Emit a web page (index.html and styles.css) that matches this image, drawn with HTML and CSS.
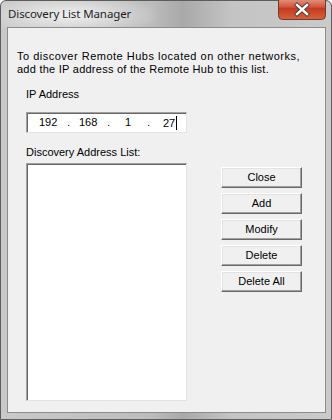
FILE: index.html
```html
<!DOCTYPE html>
<html>
<head>
<meta charset="utf-8">
<link rel="stylesheet" href="styles.css">
</head>
<body>
<div class="window">
  <div class="titlebar">
    <span class="title">Discovery List Manager</span>
    <div class="close-btn">
      <svg width="48" height="20" viewBox="0 0 48 20">
        <defs>
          <linearGradient id="rg" x1="0" y1="0" x2="0" y2="1">
            <stop offset="0" stop-color="#e8a592"/>
            <stop offset="0.45" stop-color="#d4533a"/>
            <stop offset="0.5" stop-color="#c3391f"/>
            <stop offset="1" stop-color="#d9623c"/>
          </linearGradient>
        </defs>
        <rect x="0.5" y="-3" width="47" height="22.5" rx="4" fill="url(#rg)" stroke="#6f3b32"/>
        <path d="M19 5 L29 14 M29 5 L19 14" stroke="#3d3d3d" stroke-width="4.2" stroke-linecap="square"/>
        <path d="M19 5 L29 14 M29 5 L19 14" stroke="#ffffff" stroke-width="2.4" stroke-linecap="square"/>
      </svg>
    </div>
  </div>
  <div class="client">
    <p class="intro"><span class="line1">To discover Remote Hubs located on other networks,</span><br><span class="line2">add the IP address of the Remote Hub to this list.</span></p>
    <div class="label ip-label">IP Address</div>
    <div class="ip-field">
      <span class="oct o1">192</span><span class="dot">.</span><span class="oct o2">168</span><span class="dot">.</span><span class="oct o3">1</span><span class="dot">.</span><span class="oct o4">27<span class="caret"></span></span>
    </div>
    <div class="lower">
      <div class="list-col">
        <div class="label">Discovery Address List:</div>
        <div class="listbox"></div>
      </div>
      <div class="btn-col">
        <div class="btn">Close</div>
        <div class="btn">Add</div>
        <div class="btn">Modify</div>
        <div class="btn">Delete</div>
        <div class="btn">Delete All</div>
      </div>
    </div>
  </div>
</div>
</body>
</html>
```

FILE: styles.css
```css
html, body {
  margin: 0;
  padding: 0;
  width: 332px;
  height: 420px;
  overflow: hidden;
  background: #ffffff;
}

.window {
  box-sizing: border-box;
  width: 332px;
  height: 420px;
  border: 1px solid #5c5c5c;
  border-radius: 6px 6px 0 0;
  background:
    radial-gradient(ellipse 90px 22px at 70px 14px, rgba(255,255,255,0.75), rgba(255,255,255,0) 100%),
    linear-gradient(to right, #c9c9c9 0%, #bdbdbd 45%, #a9a9a9 55%, #c4c4c4 70%, #cacaca 100%);
  padding: 0 5px 6px 6px;
  display: flex;
  flex-direction: column;
  font-family: "Liberation Sans", Arial, sans-serif;
}

.titlebar {
  height: 26px;
  display: flex;
  align-items: flex-start;
  justify-content: space-between;
  flex: none;
}

.title {
  font-family: "Noto Sans", "Open Sans", sans-serif;
  font-size: 11.5px;
  color: #1e1e1e;
  margin-top: 5px;
  margin-left: 1px;
  letter-spacing: -0.1px;
}

.close-btn {
  width: 48px;
  height: 20px;
  margin-top: -1px;
}

.close-btn svg {
  display: block;
}

.client {
  flex: 1;
  background: #f0f0f0;
  border: 1px solid #8c8c8c;
  padding: 0 0 0 9px;
  font-size: 11px;
  color: #000;
  display: flex;
  flex-direction: column;
}

.intro {
  margin: 22px 0 0 0;
  line-height: 13px;
  white-space: nowrap;
}

.line1 {
  letter-spacing: 0.5px;
}

.line2 {
  letter-spacing: 0.25px;
}

.label {
  line-height: 13px;
}

.ip-label {
  margin: 12px 0 0 9px;
}

.ip-field {
  box-sizing: border-box;
  margin: 11px 0 0 9px;
  width: 161px;
  height: 21px;
  background: #fff;
  border-style: solid;
  border-width: 1px;
  border-color: #a0a0a0 #e3e3e3 #e3e3e3 #a0a0a0;
  box-shadow: inset 1px 1px 0 #696969;
  position: relative;
  line-height: 13px;
}

.oct, .dot {
  position: absolute;
  top: 3px;
}
.o1 { left: 12px; }
.o2 { left: 52px; }
.o3 { left: 98px; }
.o4 { left: 136px; }
.dot:nth-child(2) { left: 40px; }
.dot:nth-child(4) { left: 80px; }
.dot:nth-child(6) { left: 120px; }

.caret {
  display: inline-block;
  width: 1px;
  height: 14px;
  background: #000;
  vertical-align: -3px;
  margin-left: 1px;
}

.lower {
  display: flex;
  margin-top: 13px;
  flex: 1;
}

.list-col {
  margin-left: 9px;
  display: flex;
  flex-direction: column;
}

.listbox {
  box-sizing: border-box;
  width: 161px;
  height: 238px;
  margin-top: 4px;
  background: #fff;
  border-style: solid;
  border-width: 1px;
  border-color: #a0a0a0 #e3e3e3 #e3e3e3 #a0a0a0;
  box-shadow: inset 1px 1px 0 #696969;
}

.btn-col {
  margin-left: 34px;
  margin-top: 21px;
  display: flex;
  flex-direction: column;
  gap: 5px;
}

.btn {
  box-sizing: border-box;
  width: 81px;
  height: 21px;
  background: #f0f0f0;
  border-style: solid;
  border-width: 1px;
  border-color: #ffffff #696969 #696969 #ffffff;
  box-shadow: inset -1px -1px 0 #a0a0a0, inset 1px 1px 0 #e3e3e3;
  text-align: center;
  line-height: 18px;
  font-size: 11px;
}
```
